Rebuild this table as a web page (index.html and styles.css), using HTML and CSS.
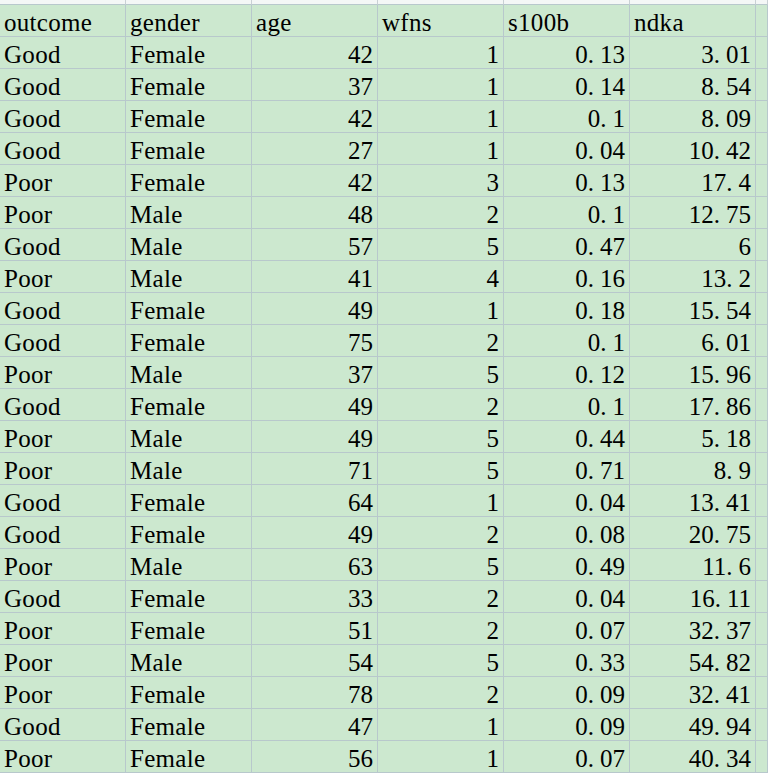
FILE: index.html
```html
<!DOCTYPE html>
<html>
<head>
<meta charset="utf-8">
<link rel="stylesheet" href="styles.css">
</head>
<body>
<div class="sheet">
  <div class="c strip"></div><div class="c strip"></div><div class="c strip"></div><div class="c strip"></div><div class="c strip"></div><div class="c strip"></div><div class="c strip"></div>

  <div class="c">outcome</div><div class="c">gender</div><div class="c">age</div><div class="c">wfns</div><div class="c">s100b</div><div class="c">ndka</div><div class="c"></div>

  <div class="c">Good</div><div class="c">Female</div><div class="c n">42</div><div class="c n">1</div><div class="c n">0<span class="dot">.</span>13</div><div class="c n">3<span class="dot">.</span>01</div><div class="c"></div>
  <div class="c">Good</div><div class="c">Female</div><div class="c n">37</div><div class="c n">1</div><div class="c n">0<span class="dot">.</span>14</div><div class="c n">8<span class="dot">.</span>54</div><div class="c"></div>
  <div class="c">Good</div><div class="c">Female</div><div class="c n">42</div><div class="c n">1</div><div class="c n">0<span class="dot">.</span>1</div><div class="c n">8<span class="dot">.</span>09</div><div class="c"></div>
  <div class="c">Good</div><div class="c">Female</div><div class="c n">27</div><div class="c n">1</div><div class="c n">0<span class="dot">.</span>04</div><div class="c n">10<span class="dot">.</span>42</div><div class="c"></div>
  <div class="c">Poor</div><div class="c">Female</div><div class="c n">42</div><div class="c n">3</div><div class="c n">0<span class="dot">.</span>13</div><div class="c n">17<span class="dot">.</span>4</div><div class="c"></div>
  <div class="c">Poor</div><div class="c">Male</div><div class="c n">48</div><div class="c n">2</div><div class="c n">0<span class="dot">.</span>1</div><div class="c n">12<span class="dot">.</span>75</div><div class="c"></div>
  <div class="c">Good</div><div class="c">Male</div><div class="c n">57</div><div class="c n">5</div><div class="c n">0<span class="dot">.</span>47</div><div class="c n">6</div><div class="c"></div>
  <div class="c">Poor</div><div class="c">Male</div><div class="c n">41</div><div class="c n">4</div><div class="c n">0<span class="dot">.</span>16</div><div class="c n">13<span class="dot">.</span>2</div><div class="c"></div>
  <div class="c">Good</div><div class="c">Female</div><div class="c n">49</div><div class="c n">1</div><div class="c n">0<span class="dot">.</span>18</div><div class="c n">15<span class="dot">.</span>54</div><div class="c"></div>
  <div class="c">Good</div><div class="c">Female</div><div class="c n">75</div><div class="c n">2</div><div class="c n">0<span class="dot">.</span>1</div><div class="c n">6<span class="dot">.</span>01</div><div class="c"></div>
  <div class="c">Poor</div><div class="c">Male</div><div class="c n">37</div><div class="c n">5</div><div class="c n">0<span class="dot">.</span>12</div><div class="c n">15<span class="dot">.</span>96</div><div class="c"></div>
  <div class="c">Good</div><div class="c">Female</div><div class="c n">49</div><div class="c n">2</div><div class="c n">0<span class="dot">.</span>1</div><div class="c n">17<span class="dot">.</span>86</div><div class="c"></div>
  <div class="c">Poor</div><div class="c">Male</div><div class="c n">49</div><div class="c n">5</div><div class="c n">0<span class="dot">.</span>44</div><div class="c n">5<span class="dot">.</span>18</div><div class="c"></div>
  <div class="c">Poor</div><div class="c">Male</div><div class="c n">71</div><div class="c n">5</div><div class="c n">0<span class="dot">.</span>71</div><div class="c n">8<span class="dot">.</span>9</div><div class="c"></div>
  <div class="c">Good</div><div class="c">Female</div><div class="c n">64</div><div class="c n">1</div><div class="c n">0<span class="dot">.</span>04</div><div class="c n">13<span class="dot">.</span>41</div><div class="c"></div>
  <div class="c">Good</div><div class="c">Female</div><div class="c n">49</div><div class="c n">2</div><div class="c n">0<span class="dot">.</span>08</div><div class="c n">20<span class="dot">.</span>75</div><div class="c"></div>
  <div class="c">Poor</div><div class="c">Male</div><div class="c n">63</div><div class="c n">5</div><div class="c n">0<span class="dot">.</span>49</div><div class="c n">11<span class="dot">.</span>6</div><div class="c"></div>
  <div class="c">Good</div><div class="c">Female</div><div class="c n">33</div><div class="c n">2</div><div class="c n">0<span class="dot">.</span>04</div><div class="c n">16<span class="dot">.</span>11</div><div class="c"></div>
  <div class="c">Poor</div><div class="c">Female</div><div class="c n">51</div><div class="c n">2</div><div class="c n">0<span class="dot">.</span>07</div><div class="c n">32<span class="dot">.</span>37</div><div class="c"></div>
  <div class="c">Poor</div><div class="c">Male</div><div class="c n">54</div><div class="c n">5</div><div class="c n">0<span class="dot">.</span>33</div><div class="c n">54<span class="dot">.</span>82</div><div class="c"></div>
  <div class="c">Poor</div><div class="c">Female</div><div class="c n">78</div><div class="c n">2</div><div class="c n">0<span class="dot">.</span>09</div><div class="c n">32<span class="dot">.</span>41</div><div class="c"></div>
  <div class="c">Good</div><div class="c">Female</div><div class="c n">47</div><div class="c n">1</div><div class="c n">0<span class="dot">.</span>09</div><div class="c n">49<span class="dot">.</span>94</div><div class="c"></div>
  <div class="c">Poor</div><div class="c">Female</div><div class="c n">56</div><div class="c n">1</div><div class="c n">0<span class="dot">.</span>07</div><div class="c n">40<span class="dot">.</span>34</div><div class="c"></div>
</div>
</body>
</html>
```

FILE: styles.css
```css
html, body {
  margin: 0;
  padding: 0;
  background: #ffffff;
}

.sheet {
  display: grid;
  grid-template-columns: repeat(6, 126px) 1fr;
  grid-template-rows: 5px;
  grid-auto-rows: 32px;
  width: 768px;
  overflow: hidden;
  font-family: "Liberation Serif", "Times New Roman", "DejaVu Serif", serif;
  font-size: 25px;
  letter-spacing: 0.3px;
  color: #000000;
}

.c {
  box-sizing: border-box;
  height: 32px;
  padding: 4px 4px 0 4px;
  line-height: 28px;
  background: #cce8cf;
  border-right: 1px solid #b8c8cc;
  border-bottom: 1px solid #b8c8cc;
  white-space: nowrap;
  overflow: hidden;
}

.c.strip {
  height: 5px;
  padding: 0;
  background: #f4f7f6;
  border-right-color: #c9d1d4;
}

.n {
  text-align: right;
  padding-right: 4px;
  letter-spacing: 0;
}

.dot {
  letter-spacing: 6px;
}
```
